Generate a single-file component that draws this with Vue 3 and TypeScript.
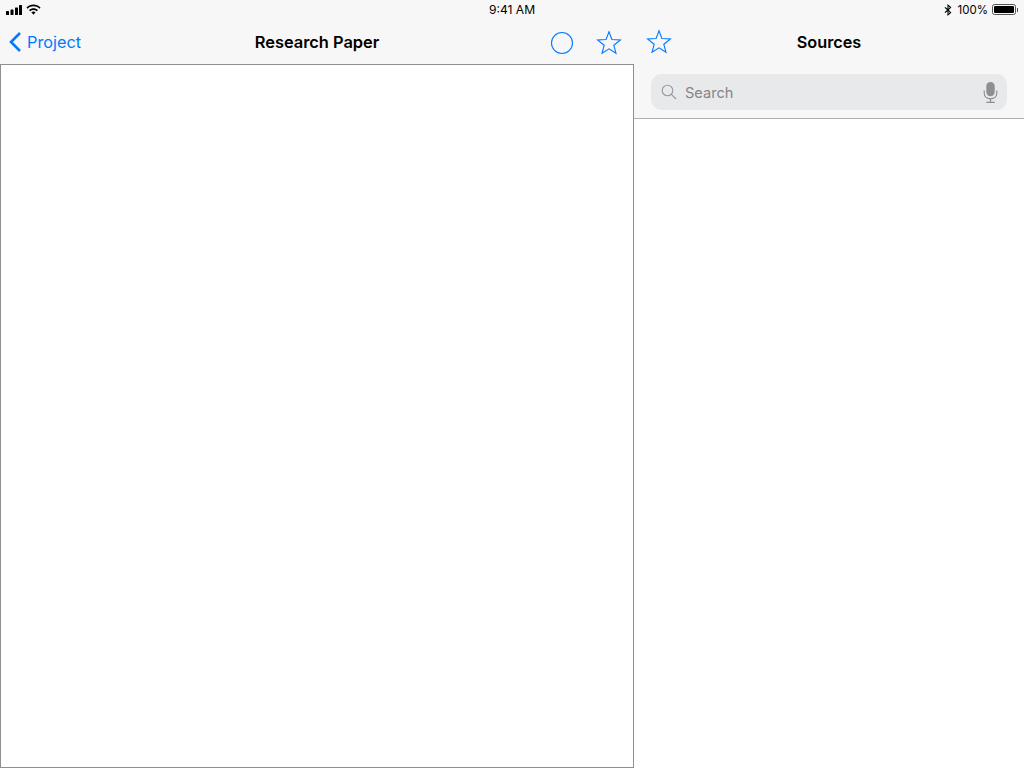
<template>
  <div class="screen">
    <header class="status">
      <div class="status__left">
        <svg class="signal" width="18" height="10" viewBox="0 0 18 10" aria-hidden="true">
          <rect x="0" y="6" width="3" height="4" rx="0.6" />
          <rect x="4.5" y="4.5" width="3" height="5.5" rx="0.6" />
          <rect x="9" y="2.5" width="3" height="7.5" rx="0.6" />
          <rect x="13" y="0" width="3" height="10" rx="0.6" />
        </svg>
        <svg class="wifi" width="15" height="11" viewBox="0 0 15 11" aria-hidden="true">
          <path d="M.4 3.400C4.400-.6 10.600-.6 14.600 3.400l-1.200 1.300C10.100 1.500 4.900 1.500 1.600 4.700z" />
          <path d="M3 6c2.600-2.500 6.400-2.500 9 0l-1.200 1.300C8.900 5.500 6.100 5.500 4.200 7.300z" />
          <path d="M5.400 8.300c1.300-1 2.900-1 4.200 0L7.500 10.700z" />
        </svg>
      </div>
      <span class="status__time">9:41 AM</span>
      <div class="status__right">
        <svg class="bt" width="8" height="12" viewBox="0 0 7 11" aria-hidden="true">
          <path d="M3 0l3.600 3-2.300 2.500 2.300 2.500L3 11V6.600L1 8.300.3 7.600 2.600 5.500.3 3.400 1 2.700l2 1.700zm1 2.100v2.200l1.200-1.200zm0 4.600v2.200l1.200-1z" />
        </svg>
        <span class="status__pct">100%</span>
        <span class="battery"><span class="battery__fill"></span></span>
        <span class="battery__cap"></span>
      </div>
    </header>

    <main class="panes">
      <section class="doc">
        <nav class="bar">
          <button class="back" type="button">
            <svg width="14" height="22" viewBox="0 0 14 22" aria-hidden="true">
              <path d="M12 2 3 11l9 9" fill="none" stroke="currentColor" stroke-width="2.600" />
            </svg>
            <span>Project</span>
          </button>
          <h1 class="bar__title">Research Paper</h1>
          <div class="bar__actions">
            <svg width="24" height="24" viewBox="0 0 24 24" aria-hidden="true">
              <circle cx="12" cy="12" r="10.500" class="line" />
            </svg>
            <svg width="26" height="25" viewBox="0 0 26 25" aria-hidden="true">
              <path :d="starPath" class="line" />
            </svg>
          </div>
        </nav>
        <div class="paper"></div>
      </section>

      <aside class="sources">
        <nav class="bar bar--sources">
          <svg class="bar__star" width="26" height="25" viewBox="0 0 26 25" aria-hidden="true">
            <path :d="starPath" class="line" />
          </svg>
          <h2 class="bar__title">Sources</h2>
        </nav>
        <div class="search-wrap">
          <label class="search">
            <svg width="16" height="16" viewBox="0 0 16 16" aria-hidden="true">
              <circle cx="6.500" cy="6.500" r="5.300" fill="none" stroke="#9a9a9e" stroke-width="1.100" />
              <path d="M10.400 10.400 15 15" stroke="#9a9a9e" stroke-width="1.200" />
            </svg>
            <span class="search__text">Search</span>
            <svg class="mic" width="15" height="21" viewBox="0 0 14 20" aria-hidden="true">
              <rect x="3" y="0" width="8" height="13.500" rx="4" fill="#8e8e93" />
              <path d="M1 8v2.500c0 3.400 2.600 5.500 6 5.500s6-2.100 6-5.500V8" fill="none" stroke="#8e8e93" stroke-width="1.100" />
              <path d="M7 16v3M3 19.400h8" stroke="#8e8e93" stroke-width="1.200" />
            </svg>
          </label>
        </div>
        <div class="list"></div>
      </aside>
    </main>
  </div>
</template>

<script setup lang="ts">
const starPath = 'M13 1.800 15.900 9.500 24.400 9.900 17.800 15.200 20 23.300 13 18.800 6 23.300 8.200 15.200 1.600 9.900 10.100 9.500Z'
</script>

<style>
html,
body {
  margin: 0;
  background: #f7f7f7;
}
</style>

<style scoped>
.screen {
  display: flex;
  flex-direction: column;
  width: 1024px;
  height: 768px;
  overflow: hidden;
  background: #f7f7f7;
  color: #000;
  font-family: Inter, "Liberation Sans", sans-serif;
}

.status {
  display: grid;
  grid-template-columns: 1fr auto 1fr;
  align-items: center;
  flex: 0 0 20px;
  padding: 0 6px;
  box-sizing: border-box;
  font-size: 12px;
}

.status__left {
  display: flex;
  align-items: center;
  gap: 2px;
  margin-top: -1px;
}

.status__left svg,
.bt {
  fill: #000;
}

.status__time {
  font-size: 12.100px;
  line-height: 18px;
  margin-top: -1px;
}

.status__right {
  display: flex;
  align-items: center;
  justify-content: flex-end;
  margin-top: -1px;
}

.status__pct {
  margin: 0 4px 0 6px;
  font-size: 11.500px;
}

.battery {
  display: flex;
  width: 24px;
  height: 11px;
  padding: 1px;
  border: 1px solid #555;
  border-radius: 2.500px;
  box-sizing: border-box;
}

.battery__fill {
  flex: 1;
  border-radius: 1px;
  background: #000;
}

.battery__cap {
  width: 1px;
  height: 4px;
  margin-left: 1px;
  background: #555;
}

.panes {
  display: flex;
  flex: 1;
  min-height: 0;
}

.doc {
  display: flex;
  flex-direction: column;
  flex: 0 0 634px;
}

.bar {
  display: flex;
  position: relative;
  align-items: center;
  justify-content: center;
  flex: 0 0 44px;
}

.bar__title {
  margin: 0;
  font-size: 16.400px;
  font-weight: 600;
}

.bar--sources .bar__title {
  font-size: 16.300px;
}

.back {
  display: flex;
  position: absolute;
  left: 8px;
  top: 11px;
  align-items: center;
  gap: 5px;
  padding: 0;
  border: none;
  background: none;
  color: #007aff;
  font: inherit;
  font-size: 16.300px;
}

.bar__actions {
  display: flex;
  position: absolute;
  right: 12px;
  top: 10px;
  align-items: center;
  gap: 22px;
}

.bar__star {
  position: absolute;
  left: 12px;
  top: 9px;
}

.line {
  fill: none;
  stroke: #007aff;
  stroke-width: 1.100;
}

.paper {
  flex: 1;
  border: 1px solid #8f8f8f;
  background: #fff;
}

.sources {
  display: flex;
  flex-direction: column;
  flex: 1;
}

.search-wrap {
  flex: 0 0 55px;
  padding: 10px 17px 0;
  box-sizing: border-box;
  border-bottom: 1px solid #b2b2b2;
}

.search {
  display: flex;
  align-items: center;
  height: 36px;
  padding: 0 9px 0 10px;
  border-radius: 10px;
  background: #e8e9ea;
}

.search__text {
  flex: 1;
  margin-left: 8px;
  padding-top: 1px;
  color: #85858a;
  font-size: 14.600px;
}

.list {
  flex: 1;
  background: #fff;
}
</style>
